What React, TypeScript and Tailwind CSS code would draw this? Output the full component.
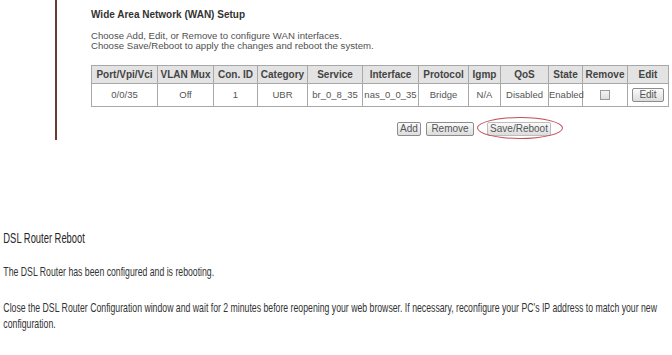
const cols = [66, 56, 44, 50, 55, 56, 50, 32, 48, 34, 45, 41];

const headers = [
  "Port/Vpi/Vci",
  "VLAN Mux",
  "Con. ID",
  "Category",
  "Service",
  "Interface",
  "Protocol",
  "Igmp",
  "QoS",
  "State",
  "Remove",
  "Edit",
];

const row = ["0/0/35", "Off", "1", "UBR", "br_0_8_35", "nas_0_0_35", "Bridge", "N/A", "Disabled", "Enabled"];

function SmallButton({ label, className = "" }: { label: string; className?: string }) {
  return (
    <span
      className={`inline-flex h-[14px] items-center justify-center rounded-[2px] border border-[#8c8c8c] bg-gradient-to-b from-[#fbfbfb] to-[#dcdcdc] px-[3px] text-[10px] leading-none text-[#555] ${className}`}
    >
      {label}
    </span>
  );
}

export default function App() {
  return (
    <div className="h-[355px] w-[672px] overflow-hidden bg-white font-['Liberation_Sans',Arial,sans-serif]">
      {/* WAN setup section */}
      <div className="flex h-[140px]">
        <div className="w-[55px] shrink-0" />
        <div className="h-[140px] border-l-2 border-[#6e3a30] pl-[34px] pt-[9px] text-[#505050]">
          <h2 className="text-[10px] font-bold leading-[12px] text-[#333]">Wide Area Network (WAN) Setup</h2>
          <div className="mt-[10px] text-[9.6px] leading-[10px]">
            <p>Choose Add, Edit, or Remove to configure WAN interfaces.</p>
            <p>Choose Save/Reboot to apply the changes and reboot the system.</p>
          </div>

          <table className="mt-[14px] table-fixed border-collapse text-[9.5px] text-[#555]" style={{ width: 577 }}>
            <colgroup>
              {cols.map((w, i) => (
                <col key={i} style={{ width: w }} />
              ))}
            </colgroup>
            <thead>
              <tr className="h-[18px] bg-[#e3e3e3]">
                {headers.map((h) => (
                  <th key={h} className="border border-[#a8a8a8] p-0 text-center text-[10px] font-bold text-[#444]">
                    {h}
                  </th>
                ))}
              </tr>
            </thead>
            <tbody>
              <tr className="h-[23px]">
                {row.map((c, i) => (
                  <td key={i} className="border border-[#a8a8a8] p-0 text-center">
                    {c}
                  </td>
                ))}
                <td className="border border-[#a8a8a8] p-0 text-center">
                  <span className="inline-block h-[10px] w-[10px] border border-[#9a9a9a] bg-gradient-to-b from-[#f4f4f4] to-[#dedede] align-middle" />
                </td>
                <td className="border border-[#a8a8a8] p-0 text-center">
                  <SmallButton label="Edit" className="w-[32px]" />
                </td>
              </tr>
            </tbody>
          </table>

          <div className="relative ml-[306px] mt-[15px] flex gap-[5px]">
            <SmallButton label="Add" className="w-[24px]" />
            <SmallButton label="Remove" className="w-[48px]" />
            <SmallButton label="Save/Reboot" className="ml-[8px] w-[64px] border-[#bdbdbd]" />
            <span className="absolute left-[80px] top-[-5px] h-[22px] w-[86px] rounded-[50%] border border-[#c0505a]" />
          </div>
        </div>
      </div>

      {/* Router reboot section */}
      <div className="w-[672px] overflow-hidden pt-[90px]">
        <div className="w-[1003px] origin-top-left scale-x-[0.67] pl-[5px] pr-[14px] text-[#333]">
          <h1 className="text-[14px] leading-[16px] text-[#262626]">DSL Router Reboot</h1>
          <p className="mt-[18px] text-[13px] leading-[16px]">The DSL Router has been configured and is rebooting.</p>
          <p className="mt-[20px] text-[13px] leading-[16px]">
            Close the DSL Router Configuration window and wait for 2 minutes before reopening your web browser. If necessary, reconfigure your PC's IP address to match your new configuration.
          </p>
        </div>
      </div>
    </div>
  );
}
